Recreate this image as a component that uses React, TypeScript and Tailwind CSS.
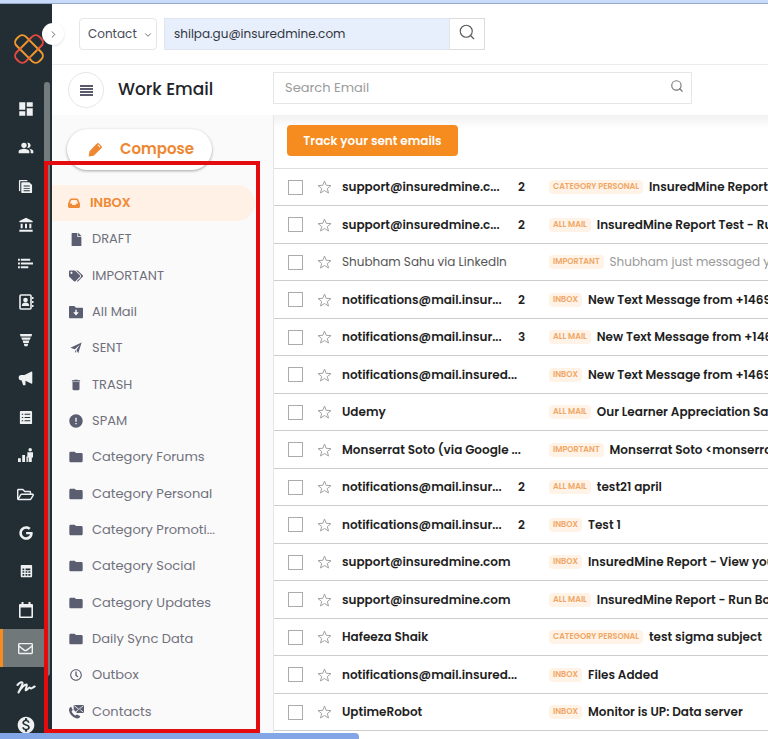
import type { ReactNode } from "react";
import {
  FaFile,
  FaTags,
  FaGoogle,
  FaRegEnvelope,
  FaRegFolderOpen,
  FaRegClock,
} from "react-icons/fa";
import { MdDashboard, MdPeopleAlt, MdAccountBalance, MdFolder, MdDelete, MdError, MdMonetizationOn } from "react-icons/md";
import { HiSpeakerphone } from "react-icons/hi";
import { ChevronDown, ChevronRight, Search } from "lucide-react";

function Icon({ size = 16, children }: { size?: number; children: ReactNode }) {
  return (
    <svg width={size} height={size} viewBox="0 0 16 16" fill="currentColor" aria-hidden="true">
      {children}
    </svg>
  );
}

const CopyIcon = () => (
  <Icon size={15}>
    <path d="M2 1h8v1.400H2.400V13H2a1 1 0 0 1-1-1V2a1 1 0 0 1 1-1z" />
    <path
      fillRule="evenodd"
      d="M4.500 3.500H12l3 3V14a1 1 0 0 1-1 1H4.500a1 1 0 0 1-1-1V4.500a1 1 0 0 1 1-1zM6 7v1h6.500V7zm0 2.500v1h6.500v-1zm0 2.500v1h6.500v-1z"
    />
  </Icon>
);
const LinesIcon = () => (
  <Icon size={15}>
    <path d="M0 3h2v2H0zM3 3h10v2H3zM0 7h2v2H0zM3 7h13v2H3zM0 11h2v2H0zM3 11h8v2H3z" />
  </Icon>
);
const AddressIcon = () => (
  <Icon>
    <rect x="2" y="1" width="11" height="14" rx="1" fill="none" stroke="currentColor" strokeWidth="1.600" />
    <path d="M14 3h1.500v2H14zM14 7h1.500v2H14zM14 11h1.500v2H14z" />
    <circle cx="7.500" cy="6" r="2.300" />
    <path d="M3.800 12c0-2.300 1.500-3.400 3.700-3.400s3.700 1.100 3.700 3.400z" />
  </Icon>
);
const FunnelIcon = () => (
  <Icon size={14}>
    <path d="M1 1h14l-.8 3H1.800zM2.700 5h10.600l-.7 2.700H3.400zM4.200 8.700h7.600l-.7 2.600H4.900zM5.500 12.300h5l-.8 2.700H6.300z" />
  </Icon>
);
const ListIcon = () => (
  <Icon size={15}>
    <path
      fillRule="evenodd"
      d="M3 1h11a1 1 0 0 1 1 1v12a1 1 0 0 1-1 1H3a1 1 0 0 1-1-1V2a1 1 0 0 1 1-1zM4 4v1h1.500V4zm0 3.500v1h1.500v-1zM4 11v1h1.500v-1zM7 4v1h6V4zm0 3.500v1h6v-1zM7 11v1h6v-1z"
    />
  </Icon>
);
const GrowthIcon = () => (
  <Icon size={15}>
    <path d="M0 11h3v4H0zM4.500 7.500h3V15h-3zM13 0a1.900 1.900 0 1 1 0 3.800A1.900 1.900 0 0 1 13 0zM10 4.500h6V10h-1.300v5h-3.400v-5H10zM9 9h1.500v6H9z" />
  </Icon>
);
const SheetIcon = () => (
  <Icon size={14}>
    <path
      fillRule="evenodd"
      d="M3 1h11a1 1 0 0 1 1 1v12a1 1 0 0 1-1 1H3a1 1 0 0 1-1-1V2a1 1 0 0 1 1-1zm1 4v2h2V5zm3.500 0v2H13V5zM4 8.200v1.900h2V8.200zm3.500 0v1.900h2V8.200zm3.200 0v1.900H13V8.200zM4 11.400v2h2v-2zm3.500 0v2h2v-2zm3.200 0v2H13v-2z"
    />
  </Icon>
);
const CalendarIcon = () => (
  <Icon>
    <path fillRule="evenodd" d="M3.500 0h2v2h5V0h2v2H14a1 1 0 0 1 1 1v12a1 1 0 0 1-1 1H2a1 1 0 0 1-1-1V3a1 1 0 0 1 1-1h1.500zM2.600 5.500v9h10.800v-9z" />
  </Icon>
);
const SignatureIcon = () => (
  <svg width="20" height="14" viewBox="0 0 20 14" fill="none" stroke="currentColor" strokeWidth="2" strokeLinecap="round" strokeLinejoin="round" aria-hidden="true">
    <path d="M1.500 5C4 2 7 1.300 6.500 3.800 6 6 4 9 2.500 12.500 5 8 9 4 10.500 4.500c1.500.6-2 5.800-.5 5.800 1.300 0 2.500-3 3.700-2.800.8.200.2 1.200 1.300 1 1.200-.2 2.500-1.500 3.700-2" />
  </svg>
);

const InboxIcon = () => (
  <Icon size={12}>
    <path fillRule="evenodd" d="M4 2h8a1.500 1.500 0 0 1 1.400 1L16 9v4a1.500 1.500 0 0 1-1.500 1.500h-13A1.500 1.500 0 0 1 0 13V9l2.600-6A1.500 1.500 0 0 1 4 2zm.4 2L2.400 8.800H5l1 2h4l1-2h2.600L11.600 4z" />
  </Icon>
);
const FolderStarIcon = () => (
  <Icon size={14}>
    <path fillRule="evenodd" d="M1 1h5l2 2h7a1 1 0 0 1 1 1v10a1 1 0 0 1-1 1H1a1 1 0 0 1-1-1V2a1 1 0 0 1 1-1zm6.200 4.500v2.700H4.800L8 12l3.200-3.800H8.800V5.500z" />
  </Icon>
);
const SendIcon = () => (
  <Icon size={12}>
    <path d="M15.500.5 11 15l-2.500-4L13 3.500 6.500 9.500.5 7.500zM6.800 10.500l1.500 2.200-1.500 2z" />
  </Icon>
);
const PhoneMailIcon = () => (
  <Icon size={15}>
    <path d="M5 1h11v8.500H8.500L5 6z" />
    <path d="m5.500 1.700 5 4 5-4M7 9l2.500-3M15.500 9 12 6" fill="none" stroke="#fafafa" strokeWidth=".9" />
    <path d="M2.300 3 4 6.500 2.800 8c.8 1.800 2.200 3.300 4 4.300l1.700-1.200 3.500 2c-.5 1.700-1.600 2.500-3.300 2.400C4.300 15 .3 10.800 0 6.500 0 4.800.8 3.600 2.300 3z" />
  </Icon>
);
const PencilIcon = () => (
  <Icon size={14}>
    <path fillRule="evenodd" d="M9 1.700 10 .8a2 2 0 0 1 2.800 0l2.400 2.400a2 2 0 0 1 0 2.800l-1 1-7.700 7.500L.7 15.500l1-6zm2 .8 2.600 2.600.7-.8-2.600-2.500z" />
  </Icon>
);
const StarIcon = () => (
  <svg width="15" height="14" viewBox="0 0 15 14" fill="none" stroke="currentColor" aria-hidden="true">
    <path d="m7.500 1 1.700 4.300 4.800.3-3.700 2.900 1.200 4.500-4-2.500-4 2.500 1.200-4.500L1 5.600l4.800-.3z" />
  </svg>
);
const Logo = () => (
  <svg width="30" height="30" viewBox="0 0 30 30" fill="none" strokeWidth="2" role="img" aria-label="InsuredMine">
    <defs>
      <linearGradient id="loop" x1="0" x2="1">
        <stop offset="0.200" stopColor="#e4493f" />
        <stop offset="0.450" stopColor="#f3992c" />
        <stop offset="0.600" stopColor="#f3992c" />
        <stop offset="0.800" stopColor="#e4493f" />
      </linearGradient>
    </defs>
    <rect x="-1" y="8.500" width="32" height="13" rx="5" transform="rotate(45 15 15)" stroke="#f3992c" />
    <rect x="-1" y="8.500" width="32" height="13" rx="5" transform="rotate(-45 15 15)" stroke="url(#loop)" />
  </svg>
);

const railItems: { label: string; icon: ReactNode; active?: boolean }[] = [
  { label: "Dashboard", icon: <MdDashboard size={18} /> },
  { label: "People", icon: <MdPeopleAlt size={16} /> },
  { label: "Documents", icon: <CopyIcon /> },
  { label: "Accounts", icon: <MdAccountBalance size={16} /> },
  { label: "Lists", icon: <LinesIcon /> },
  { label: "Address book", icon: <AddressIcon /> },
  { label: "Pipeline", icon: <FunnelIcon /> },
  { label: "Campaigns", icon: <HiSpeakerphone size={17} /> },
  { label: "Tasks", icon: <ListIcon /> },
  { label: "Reports", icon: <GrowthIcon /> },
  { label: "Files", icon: <FaRegFolderOpen size={17} /> },
  { label: "Google", icon: <FaGoogle size={14} /> },
  { label: "Sheets", icon: <SheetIcon /> },
  { label: "Calendar", icon: <CalendarIcon /> },
  { label: "Email", icon: <FaRegEnvelope size={15} />, active: true },
  { label: "Signatures", icon: <SignatureIcon /> },
  { label: "Billing", icon: <MdMonetizationOn size={20} /> },
];

const folders: { name: string; icon: ReactNode; active?: boolean }[] = [
  { name: "INBOX", icon: <InboxIcon />, active: true },
  { name: "DRAFT", icon: <FaFile size={13} /> },
  { name: "IMPORTANT", icon: <FaTags size={14} /> },
  { name: "All Mail", icon: <FolderStarIcon /> },
  { name: "SENT", icon: <SendIcon /> },
  { name: "TRASH", icon: <MdDelete size={14} /> },
  { name: "SPAM", icon: <MdError size={16} /> },
  { name: "Category Forums", icon: <MdFolder size={16} /> },
  { name: "Category Personal", icon: <MdFolder size={16} /> },
  { name: "Category Promoti...", icon: <MdFolder size={16} /> },
  { name: "Category Social", icon: <MdFolder size={16} /> },
  { name: "Category Updates", icon: <MdFolder size={16} /> },
  { name: "Daily Sync Data", icon: <MdFolder size={16} /> },
  { name: "Outbox", icon: <FaRegClock size={12} /> },
  { name: "Contacts", icon: <PhoneMailIcon /> },
];

const mails: { from: string; count?: number; tag: string; subject: string; read?: boolean }[] = [
  { from: "support@insuredmine.c...", count: 2, tag: "CATEGORY PERSONAL", subject: "InsuredMine Report" },
  { from: "support@insuredmine.c...", count: 2, tag: "ALL MAIL", subject: "InsuredMine Report Test - Run" },
  { from: "Shubham Sahu via LinkedIn", tag: "IMPORTANT", subject: "Shubham just messaged you", read: true },
  { from: "notifications@mail.insur...", count: 2, tag: "INBOX", subject: "New Text Message from +1469" },
  { from: "notifications@mail.insur...", count: 3, tag: "ALL MAIL", subject: "New Text Message from +1469" },
  { from: "notifications@mail.insured...", tag: "INBOX", subject: "New Text Message from +1469" },
  { from: "Udemy", tag: "ALL MAIL", subject: "Our Learner Appreciation Sale" },
  { from: "Monserrat Soto (via Google ...", tag: "IMPORTANT", subject: "Monserrat Soto <monserrat" },
  { from: "notifications@mail.insur...", count: 2, tag: "ALL MAIL", subject: "test21 april" },
  { from: "notifications@mail.insur...", count: 2, tag: "INBOX", subject: "Test 1" },
  { from: "support@insuredmine.com", tag: "INBOX", subject: "InsuredMine Report - View your" },
  { from: "support@insuredmine.com", tag: "ALL MAIL", subject: "InsuredMine Report - Run Book" },
  { from: "Hafeeza Shaik", tag: "CATEGORY PERSONAL", subject: "test sigma subject" },
  { from: "notifications@mail.insured...", tag: "INBOX", subject: "Files Added" },
  { from: "UptimeRobot", tag: "INBOX", subject: "Monitor is UP: Data server" },
];

function Rail() {
  return (
    <nav aria-label="Main" className="relative w-[52px] shrink-0 bg-[#222e34] text-[#eef0f1]">
      <div className="h-[86px] pt-[30px] pl-3.5">
        <Logo />
      </div>
      <ul>
        {railItems.map((item) => (
          <li key={item.label} className="h-[38px] even:h-[39px]">
            <a
              href="#"
              aria-label={item.label}
              className={
                item.active
                  ? "flex h-full w-[46px] items-center justify-center border-l-3 border-[#f68b1f] bg-[#717879] pl-0.5"
                  : "flex h-full w-[46px] items-center justify-center border-l-3 border-transparent pl-0.5"
              }
            >
              {item.icon}
            </a>
          </li>
        ))}
      </ul>
      <div className="absolute top-[78px] right-0.5 h-[594px] w-1.5 rounded-full bg-[#737b7e]" />
      <button
        aria-label="Expand menu"
        className="absolute top-[19px] -right-3 z-10 flex size-[22px] items-center justify-center rounded-full bg-white text-[#5c6166] shadow"
      >
        <ChevronRight size={11} />
      </button>
    </nav>
  );
}

function TopBar() {
  return (
    <header className="flex h-[61px] shrink-0 items-start gap-[7px] border-b border-[#ececec] pt-3.5 pl-[27px]">
      <div className="relative">
        <select
          aria-label="Search in"
          className="h-8 w-[78px] appearance-none rounded-sm border border-[#e6e6e9] bg-white pl-2 text-[12px] text-[#474b55]"
        >
          <option>Contact</option>
        </select>
        <ChevronDown size={10} className="pointer-events-none absolute top-3 right-1 text-[#55585f]" />
      </div>
      <form className="flex" role="search">
        <input
          aria-label="Contact search"
          defaultValue="shilpa.gu@insuredmine.com"
          className="h-8 w-[286px] border border-[#dfe4ee] bg-[#e7effd] px-[9px] text-[12px] text-[#33363c]"
        />
        <button
          type="button"
          aria-label="Search"
          className="flex h-8 w-[35px] items-start justify-center border border-l-0 border-[#dcdcdc] pt-1 text-[#55585c]"
        >
          <Search size={18} strokeWidth={1.500} />
        </button>
      </form>
    </header>
  );
}

function MailBar() {
  return (
    <div className="flex h-[50px] shrink-0 items-center">
      <div className="flex w-[221px] shrink-0 items-center gap-3.5 pl-4">
        <button
          aria-label="Toggle folders"
          className="flex size-9 flex-col items-center justify-center gap-px rounded-full border border-[#e6e6e9]"
        >
          <span className="h-0.5 w-[13px] bg-[#5a5a6c]" />
          <span className="h-0.5 w-[13px] bg-[#5a5a6c]" />
          <span className="h-0.5 w-[13px] bg-[#5a5a6c]" />
          <span className="h-0.5 w-[13px] bg-[#5a5a6c]" />
        </button>
        <h1 className="text-[17px] font-medium text-[#202428]">Work Email</h1>
      </div>
      <div className="relative mr-4 mb-1 w-[419px]">
        <input
          type="search"
          aria-label="Search Email"
          placeholder="Search Email"
          className="h-8 w-full border border-[#e6e6e9] px-[11px] text-[13px] placeholder:text-[#9b9b9b]"
        />
        <Search size={14} strokeWidth={2} className="absolute top-[7px] right-2 text-[#7a7a7a]" />
      </div>
    </div>
  );
}

function Sidebar() {
  return (
    <aside className="w-[221px] shrink-0 bg-[#fafafa] pt-3.5">
      <button className="ml-[15px] flex h-[41px] w-[145px] items-center gap-[18px] rounded-full bg-white pl-[21px] text-[15px] font-semibold text-[#ee8732] shadow-[0_1px_3px_rgba(0,0,0,0.35)]">
        <PencilIcon />
        Compose
      </button>
      <ul className="mt-[15px]">
        {folders.map((f) => (
          <li key={f.name} className="h-9 nth-[3n]:h-[37px]">
            <a
              href="#"
              className={
                f.active
                  ? "mr-[18px] flex h-full items-center gap-2 rounded-r-full bg-[#fff1e5] pl-4 text-[13px] font-semibold text-[#ef8a35]"
                  : "flex h-full items-center gap-2 pl-4 text-[13px] text-[#70707c]"
              }
            >
              <span className={f.active ? "flex w-3.5 justify-start" : "flex w-4 justify-center text-[#5b5d70]"}>{f.icon}</span>
              {f.name}
            </a>
          </li>
        ))}
      </ul>
    </aside>
  );
}

function MailList() {
  return (
    <main className="min-w-0 flex-1 border-l border-[#e6e6e6] bg-linear-to-b from-[#f1f1f1] to-white to-[14px]">
      <div className="flex h-[54px] items-center border-b border-[#dedede] pb-0.5 pl-[13px]">
        <button className="h-[31px] w-[171px] rounded bg-[#f68b1f] text-[12px] font-semibold text-white">
          Track your sent emails
        </button>
      </div>
      <ul>
        {mails.map((m, i) => (
          <li
            key={i}
            className="flex h-[37px] items-center overflow-hidden border-b border-[#cdcdcd] pl-3.5 text-[12px] whitespace-nowrap even:h-[38px]"
          >
            <input
              type="checkbox"
              aria-label={"Select mail from " + m.from}
              className="size-[15px] shrink-0 appearance-none border border-[#ababab] bg-white"
            />
            <button aria-label="Star" className="ml-3.5 shrink-0 text-[#a3a3a3]">
              <StarIcon />
            </button>
            <span className={m.read ? "ml-2.5 w-44 shrink-0 text-[#555555]" : "ml-2.5 w-44 shrink-0 font-semibold text-[#1f1f1f]"}>
              {m.from}
            </span>
            <span className="w-[31px] shrink-0 font-semibold text-[#1f1f1f]">{m.count}</span>
            <span className="shrink-0 rounded-sm bg-[#fff2e6] px-1 text-[8px] leading-[14px] font-semibold text-[#f0a765]">
              {m.tag}
            </span>
            <span className={m.read ? "ml-1.5 text-[#999999]" : "ml-1.5 font-semibold text-[#1f1f1f]"}>{m.subject}</span>
          </li>
        ))}
      </ul>
    </main>
  );
}

export default function App() {
  return (
    <div className="relative flex h-screen flex-col overflow-hidden bg-white font-['Poppins','Inter',sans-serif]">
      <div className="h-1 shrink-0 border-b border-[#95a7cb] bg-[#c8dcfa]" />
      <div className="flex min-h-0 flex-1">
        <Rail />
        <div className="flex min-w-0 flex-1 flex-col">
          <TopBar />
          <MailBar />
          <div className="flex min-h-0 flex-1">
            <Sidebar />
            <MailList />
          </div>
        </div>
      </div>
      <div className="pointer-events-none absolute top-[161px] bottom-1.5 left-11 w-[216px] border-4 border-[#e30b0e]" />
      <div className="absolute bottom-0 left-0 h-1.5 w-[359px] rounded-tr bg-[#82a6e6]" />
    </div>
  );
}
